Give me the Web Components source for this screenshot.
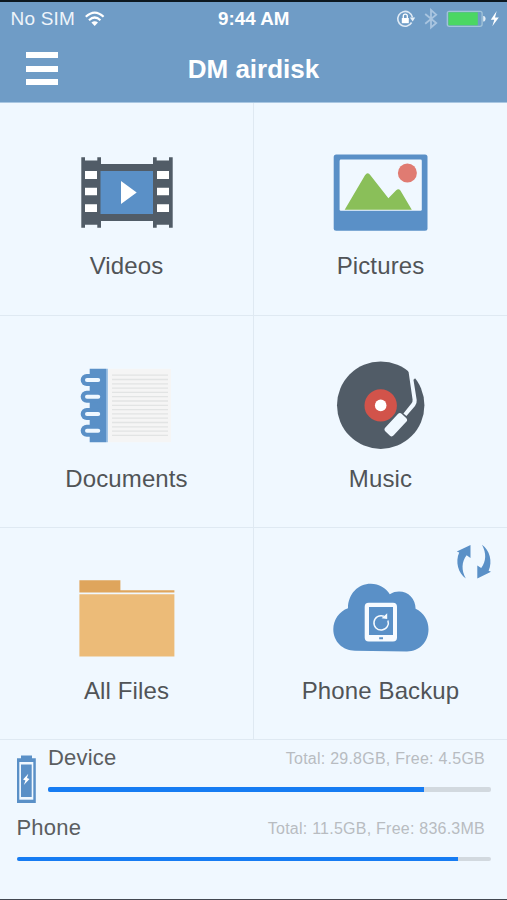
<!DOCTYPE html>
<html lang="en">
<head>
<meta charset="utf-8">
<title>DM airdisk</title>
<style>
html,body{margin:0;background:#f0f8ff}
body{font-family:"Liberation Sans",Arial,sans-serif;width:507px;height:900px;overflow:hidden}
</style>
</head>
<body>
<air-app></air-app>
<script>
const icons = {
videos: `<svg viewBox="66 143 121 100"><path fill="#515c67" d="M81.3 157.3H85V160.5H97.3V157.3H101V164H153V157.3H156.7V160.5H169V157.3H172.7V227.7H169V224.7H156.7V227.7H153V221H101V227.7H97.3V224.7H85V227.7H81.3Z"/><path fill="#5a90c7" d="M100.5 171H153V214H100.5Z"/><path fill="#fff" d="M85 171h12v8H85zM85 187.8h12v7.5H85zM85 204.2h12v7.8H85zM157 171h12v8h-12zM157 187.8h12v7.5h-12zM157 204.2h12v7.8h-12zM121 181l15.7 11.4L121 204z"/></svg>`,
pictures: `<svg viewBox="320 143 121 100"><rect x="333.7" y="154.4" width="93.8" height="76.3" rx="2.5" fill="#5a90c7"/><rect x="339.6" y="159.6" width="82.2" height="51.2" rx="1.3" fill="#f0f8ff"/><circle cx="407.4" cy="173" r="9.5" fill="#e07b72"/><path fill="#8abf59" d="M344.7 209.8L365 175.2Q367.7 171.5 370.4 175.2L388.4 198.2L396.2 190.2Q398.4 188 400.4 190.4L411.8 209.8Z"/></svg>`,
documents: `<svg viewBox="66 356 121 100"><path fill="#f5f5f5" d="M107.7 368.8H171V442.3H107.7Z"/><path stroke="#e2e4e4" stroke-width="1.3" d="${Array.from({length:15},(_,i)=>`M112 ${(375.2+i*4.3).toFixed(1)}H168`).join('')}"/><path fill="#5a90c7" d="M89.7 368.7H106V442.3H89.7Z"/><path fill="#8fb7df" d="M106 368.7h1.8v73.6H106z"/>${[380,396.8,414,430.7].map(y=>`<rect x="80.7" y="${y-6}" width="22" height="12" rx="6" fill="#5a90c7"/><rect x="85" y="${y-2}" width="15.2" height="4" rx="2" fill="#f0f8ff"/>`).join('')}</svg>`,
music: `<svg viewBox="320 356 121 100"><circle cx="380.7" cy="405.2" r="43.7" fill="#515c67"/><circle cx="380.7" cy="405.4" r="16.2" fill="#d2534a"/><circle cx="380.7" cy="405.4" r="5.8" fill="#fff"/><path fill="#f0f8ff" d="M406 367L412 370.5L416.7 400Q417 403.6 415 406L406.4 416L403.4 413.6L411.4 403.6Q412.8 402 412.6 399.8L408.6 372Z"/><path fill="#f0f8ff" d="M408.5 369L417 376L413.5 380Z"/><rect x="383.8" y="419" width="24" height="11.4" rx="2.8" fill="#f0f8ff" transform="rotate(-47 395.8 424.7)"/></svg>`,
files: `<svg viewBox="66 568 121 100"><path fill="#dfa55c" d="M79.4 580.2H120.4V590.2H174.4V592.6H79.4Z"/><path fill="#ecbb78" d="M79.4 594.2H174.4V656.5H79.4Z"/></svg>`,
backup: `<svg viewBox="320 568 121 100"><path fill="#5a90c7" d="M348 608.3C348 594 358 583.8 370.8 583.8C379 583.8 386 588 389.8 594.2C393 592.3 396 591.6 399 591.6C408.5 591.6 415.6 599 415.6 608.8C423.5 612.6 428.5 620.4 428.5 629.2C428.5 641.7 419.5 651.4 407 651.4L355 650.7C342.6 650.7 333.3 641.5 333.3 629.3C333.3 620 339.4 611.2 348 608.3Z"/><path fill="#f7fbff" fill-rule="evenodd" d="M368.7 602.7H393Q397 602.7 397 606.7V637.4Q397 641.4 393 641.4H368.7Q364.7 641.4 364.7 637.4V606.7Q364.7 602.7 368.7 602.7ZM369 607V635H393V607ZM379.2 637.2V639.2H383V637.2Z"/><path fill="none" stroke="#f7fbff" stroke-width="1.5" d="M383.8 616.2A7.2 7.2 0 1 0 387.9 620.4"/><path fill="#f7fbff" d="M381.6 618.2L387.2 613.2V619Z"/></svg>`
};

/* Registers an element whose shadow root is filled from a template. */
function define(name, markup) {
  customElements.define(name, class extends HTMLElement {
    constructor() {
      super();
      const t = document.createElement('template');
      t.innerHTML = typeof markup === 'function' ? markup(this) : markup;
      this.attachShadow({mode: 'open'}).append(t.content.cloneNode(true));
    }
  });
}

define('status-bar', `<style>
:host{display:grid;grid-template-columns:1fr auto 1fr;align-items:center;height:32px;padding:0 8px 0 10.5px;color:#fff;font-size:19px;line-height:32px}
.l,.r{display:flex;align-items:center}.l{gap:9.5px;color:#eef4fa}.l span{letter-spacing:.2px;margin-top:1px}.r{justify-content:flex-end}
b{font-size:18.8px;margin:1px 2px 0 0}svg{display:block}
</style>
<div class="l"><span>No SIM</span><svg width="20" height="16" viewBox="85 9 20 16"><g fill="none" stroke="#fff" stroke-width="2.2"><path d="M85.8 14.7Q94.7 6.4 103.6 14.7M89 18.2Q94.7 12.8 100.4 18.2"/></g><path fill="#fff" d="M91.4 20.6Q94.7 17.8 98 20.6L94.7 24Z"/></svg></div>
<b>9:44 AM</b>
<div class="r"><svg width="105" height="22" viewBox="394 7 105 22">
<circle cx="405.2" cy="17.8" r="7.4" fill="none" stroke="#dfeaf5" stroke-width="1.6" stroke-dasharray="41 5.5" transform="rotate(30 405.2 17.8)"/><path fill="#e8f1f8" d="M409.8 16.6h5.4l-2.5 3.8z"/><rect x="401.8" y="17" width="7" height="5.2" fill="#fff"/><path d="M403.3 17.5v-2.4a2 2 0 0 1 4 0v2.4" fill="none" stroke="#fff" stroke-width="1.3"/>
<path d="M425.2 13L436.2 22L431 26.5V9L436.2 13.7L425.2 22.8" fill="none" stroke="#a9c5e0" stroke-width="1.8"/>
<rect x="447.3" y="10.3" width="34.8" height="15" rx="2" fill="none" stroke="#a3c4d9" stroke-width="1.3"/><rect x="448.4" y="11.3" width="29.4" height="13" fill="#4bd763"/><path fill="#e4eef7" d="M483.2 15h1q1.4 1.3 1.4 2.8t-1.4 2.8h-1z"/><path fill="#fff" d="M496.7 10L490.8 18.8H494.3L492.3 25.3L498.8 16.4H495Z"/></svg></div>`);

define('nav-bar', `<style>
:host{display:grid;grid-template-columns:32px 1fr 32px;align-items:center;padding:0 26px;height:68px;color:#fff}
.m{display:grid;gap:7.4px;margin-top:1px}.m i{height:6px;background:#fff}
h1{margin:1px 0 0;text-align:center;font-size:26px;line-height:32px;font-weight:bold}
</style><div class="m"><i></i><i></i><i></i></div><h1><slot></slot></h1>`);

define('menu-tile', el => `<style>
:host{display:flex;flex-direction:column;align-items:center;box-sizing:border-box;position:relative;padding-top:40px;border-bottom:1px solid #dfe9f2}
:host(:nth-child(odd)){border-right:1px solid #dfe9f2}
svg{display:block;width:121px;height:100px;flex:none}
span{font-size:24px;line-height:28px;margin-top:9px;letter-spacing:.12px;color:#515457}
::slotted([slot=badge]){position:absolute;top:14px;right:14px}
</style>${icons[el.getAttribute('icon')]}<span><slot></slot></span><slot name="badge"></slot>`);

define('sync-badge', `<style>:host{display:block;width:38px;height:38px}svg{display:block}</style>
<svg width="38" height="38" viewBox="455 542 38 38"><g fill="#5a90c7"><path id="a" d="M470.5 545V558L466.6 555.3C461.6 562 461.2 570 465.8 578.6C458.2 573.5 455 562 459.2 552.6L456.8 551.6Z"/><path d="M470.5 545V558L466.6 555.3C461.6 562 461.2 570 465.8 578.6C458.2 573.5 455 562 459.2 552.6L456.8 551.6Z" transform="rotate(180 473.9 561.7)"/></g></svg>`);

define('storage-meter', el => `<style>
:host{display:block;flex:1}
.t{display:flex;justify-content:space-between;align-items:baseline;padding-right:6px;height:42px;line-height:26px}
.n{font-size:22px;color:#5b5e61;letter-spacing:.2px}
.v{font-size:16px;color:#b8bcc1;letter-spacing:.24px;position:relative;top:-1px}
.b{height:4.5px;background:#d2d9df;border-radius:2px;overflow:hidden}.b i{display:block;height:100%;background:#167cf3;width:${el.getAttribute('fill')}%}
</style><div class="t"><span class="n"><slot></slot></span><span class="v"><slot name="info"></slot></span></div><div class="b"><i></i></div>`);

define('device-battery', `<style>:host{display:block;width:20px;height:50px}svg{display:block}</style>
<svg width="20" height="50" viewBox="17 754 20 50"><path fill="#5a90c7" d="M21 755.5H32V758.3H35.8V803H16.8V758.3H21Z"/><path fill="#f0f8ff" d="M19.3 762H33.3V799.7H19.3Z"/><path fill="#5a90c7" d="M21 764.5H31.7V797H21Z"/><path fill="#fff" d="M28.3 773.8L23 779.4L25.5 780.4L23.8 785L29.5 779L27 778Z"/></svg>`);

define('air-app', `<style>
:host{display:grid;grid-template-rows:103px 637px 160px;width:507px;height:900px;box-sizing:border-box;background:#f0f8ff}
header{background:#6f9cc6;border-top:2px solid #0d1820;border-bottom:1px solid #a9c7e2;box-sizing:border-box}
main{display:grid;grid-template-columns:254px 253px;grid-template-rows:213px 212px 212px}
footer{box-sizing:border-box;padding:5px 16px 0 16.5px;border-bottom:1px solid #424851}
.d{display:flex;gap:11.5px;height:69.5px}
.d device-battery{margin-top:9px}
</style>
<header><status-bar></status-bar><nav-bar>DM airdisk</nav-bar></header>
<main>
<menu-tile icon="videos">Videos</menu-tile><menu-tile icon="pictures">Pictures</menu-tile>
<menu-tile icon="documents">Documents</menu-tile><menu-tile icon="music">Music</menu-tile>
<menu-tile icon="files">All Files</menu-tile><menu-tile icon="backup">Phone Backup<sync-badge slot="badge"></sync-badge></menu-tile>
</main>
<footer>
<div class="d"><device-battery></device-battery><storage-meter fill="84.9">Device<span slot="info">Total: 29.8GB, Free: 4.5GB</span></storage-meter></div>
<storage-meter fill="93">Phone<span slot="info">Total: 11.5GB, Free: 836.3MB</span></storage-meter>
</footer>`);
</script>
</body>
</html>
